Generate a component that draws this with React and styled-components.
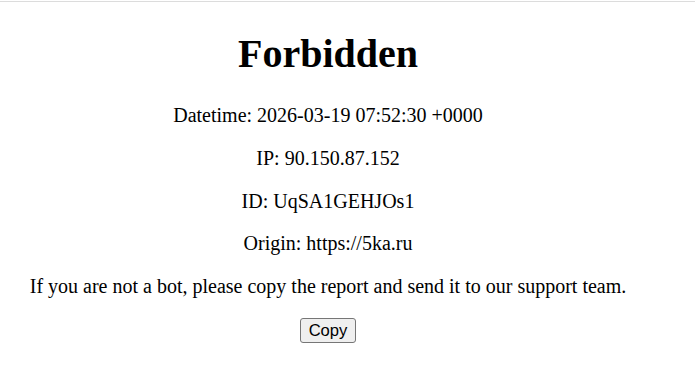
import React from 'react'
import styled, { createGlobalStyle } from 'styled-components'

const GlobalStyle = createGlobalStyle`
  html, body {
    margin: 0;
    padding: 0;
    background: #ffffff;
  }
  body {
    font-family: "Liberation Serif", "Times New Roman", serif;
    color: #000;
  }
`

const Frame = styled.div`
  border-top: 1px solid #dcdcdc;
  margin-top: 1px;
  width: 100%;
`

const Page = styled.div`
  width: 656px;
  padding: 29px 10px 0;
  box-sizing: border-box;
  text-align: center;
`

const Title = styled.h1`
  font-size: 40px;
  font-weight: bold;
  margin: 0 0 27px;
  line-height: 46px;
`

const Line = styled.p`
  font-size: 20px;
  margin: 20px 0;
  line-height: 22.8px;
`

const CopyButton = styled.button`
  font-family: "Liberation Sans", Arial, sans-serif;
  font-size: 16.6px;
  padding: 2px 8px;
  line-height: 19px;
  background: #efefef;
  border: 1px solid #767676;
  border-radius: 3px;
  color: #000;
  cursor: pointer;
`

export default function App() {
  const info = [
    'Datetime: 2026-03-19 07:52:30 +0000',
    'IP: 90.150.87.152',
    'ID: UqSA1GEHJOs1',
    'Origin: https://5ka.ru',
    'If you are not a bot, please copy the report and send it to our support team.',
  ]

  return (
    <>
      <GlobalStyle />
      <Frame>
        <Page>
          <Title>Forbidden</Title>
          {info.map((text) => (
            <Line key={text}>{text}</Line>
          ))}
          <CopyButton>Copy</CopyButton>
        </Page>
      </Frame>
    </>
  )
}
